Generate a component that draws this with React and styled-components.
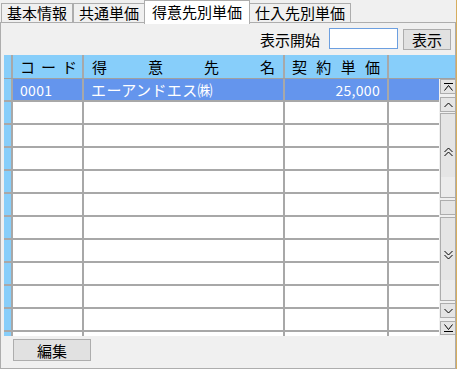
import React from 'react';
import styled, { createGlobalStyle } from 'styled-components';

const GlobalStyle = createGlobalStyle`
  html, body {
    margin: 0;
    padding: 0;
    background: #f0f0f0;
  }
  body {
    font-family: "Noto Sans CJK JP", "DejaVu Sans", sans-serif;
    font-size: 15px;
    color: #000000;
  }
  * {
    box-sizing: border-box;
  }
`;

const Window = styled.div`
  width: 457px;
  height: 369px;
  display: flex;
  flex-direction: column;
  border-right: 1px solid #d6ad5e;
  background: #f0f0f0;
  overflow: hidden;
`;

const TabBar = styled.div`
  display: flex;
  align-items: flex-end;
  height: 23px;
  padding-left: 1px;
  position: relative;
  z-index: 1;
`;

const Tab = styled.div`
  display: flex;
  align-items: center;
  height: ${(p) => (p.$active ? '24px' : '20px')};
  margin: ${(p) => (p.$active ? '0 -1px -1px' : '0')};
  padding: ${(p) => (p.$active ? '0 7px 2px' : '0 5px 1px')};
  border: 1px solid #adadad;
  border-bottom: ${(p) => (p.$active ? 'none' : '1px solid #adadad')};
  background: ${(p) => (p.$active ? '#ffffff' : '#f0f0f0')};
  line-height: 1;
  white-space: nowrap;
  z-index: ${(p) => (p.$active ? 2 : 1)};
`;

const Panel = styled.div`
  flex: 1;
  display: flex;
  flex-direction: column;
  border: 1px solid #adadad;
  margin-top: -1px;
  min-height: 0;
`;

const Toolbar = styled.div`
  height: 32px;
  display: flex;
  align-items: center;
  justify-content: flex-end;
  padding-right: 4px;
`;

const FieldLabel = styled.span`
  margin-right: 9px;
  line-height: 1;
`;

const TextInput = styled.input`
  width: 69px;
  height: 21px;
  margin: -1px 5px 0 0;
  border: 1px solid #6c9fe0;
  background: #ffffff;
  outline: none;
  font: inherit;
`;

const Button = styled.button`
  width: ${(p) => p.$w}px;
  height: ${(p) => p.$h}px;
  padding: 0;
  border: 1px solid #adadad;
  background: #e1e1e1;
  font-family: inherit;
  font-size: 15px;
  line-height: 1;
  color: #000000;
`;

const Grid = styled.div`
  flex: 1;
  display: flex;
  flex-direction: column;
  margin-left: 3px;
  min-height: 0;
`;

const HeaderRow = styled.div`
  display: grid;
  grid-template-columns: 9px 71px 201px 104px 1fr;
  height: 24px;
  background: #87cefa;
  border-bottom: 1px solid #a0a0a0;
`;

const HeaderCell = styled.div`
  display: flex;
  align-items: center;
  justify-content: space-between;
  padding: ${(p) => p.$pad};
  border-right: ${(p) => (p.$last ? 'none' : '2px solid #a8a8a8')};
  line-height: 1;
`;

const Body = styled.div`
  flex: 1;
  display: flex;
  min-height: 0;
  overflow: hidden;
`;

const Rows = styled.div`
  width: 435px;
  display: flex;
  flex-direction: column;
  background: #ffffff;
`;

const Row = styled.div`
  display: grid;
  grid-template-columns: 9px 71px 201px 104px 50px;
  flex: 0 0 23px;
  border-bottom: 2px solid #a8a8a8;
  background: ${(p) => (p.$selected ? '#6495ed' : '#ffffff')};
  color: ${(p) => (p.$selected ? '#ffffff' : '#000000')};
`;

const Gutter = styled.div`
  background: #87cefa;
  border-right: 2px solid #a8a8a8;
`;

const Cell = styled.div`
  display: flex;
  align-items: center;
  justify-content: ${(p) => (p.$right ? 'flex-end' : 'flex-start')};
  padding: 0 7px;
  border-right: ${(p) => (p.$last ? 'none' : '2px solid #a8a8a8')};
  font-size: ${(p) => (p.$num ? '14px' : '15px')};
  letter-spacing: ${(p) => (p.$num ? '0.3px' : '0.4px')};
  white-space: nowrap;
  line-height: 1;
`;

const ScrollBar = styled.div`
  flex: 0 0 17px;
  display: flex;
  flex-direction: column;
  padding-left: 1px;
  background: #f0f0f0;
`;

const ScrollButton = styled.div`
  flex: 0 0 ${(p) => p.$h}px;
  margin-top: ${(p) => p.$gap}px;
  display: flex;
  align-items: center;
  justify-content: center;
  border: 1px solid #adadad;
  background: ${(p) =>
    p.$page ? 'linear-gradient(#e5e5e5 0%, #e5e5e5 76%, #ececec 76%, #ececec 100%)' : '#e5e5e5'};
  padding-bottom: ${(p) => (p.$page ? '8px' : '0')};
`;

const Footer = styled.div`
  height: 32px;
  padding: 3px 0 0 12px;
  background: #f0f0f0;
`;

const icons = {
  top: 'M1 1.5H10M1.5 8.5L5.5 3.5L9.5 8.5',
  up: 'M1.5 7L5.5 3L9.5 7',
  dblUp: 'M1.5 5L5.5 1L9.5 5M1.5 9L5.5 5L9.5 9',
  dblDown: 'M1.5 1L5.5 5L9.5 1M1.5 5L5.5 9L9.5 5',
  down: 'M1.5 3L5.5 7L9.5 3',
  bottom: 'M1.5 1.5L5.5 6.5L9.5 1.5M1 8.5H10',
};

const Arrow = ({ kind }) => (
  <svg width="11" height="10" viewBox="0 0 11 10">
    <path d={icons[kind]} fill="none" stroke="#000" strokeWidth="1" />
  </svg>
);

const Spread = ({ text }) => text.split('').map((c, i) => <span key={i}>{c}</span>);

const rows = [
  { code: '0001', name: 'エーアンドエス㈱', price: '25,000' },
  ...Array.from({ length: 11 }, () => ({ code: '', name: '', price: '' })),
];

export default function App() {
  return (
    <>
      <GlobalStyle />
      <Window>
        <TabBar>
          <Tab>基本情報</Tab>
          <Tab>共通単価</Tab>
          <Tab $active>得意先別単価</Tab>
          <Tab>仕入先別単価</Tab>
        </TabBar>
        <Panel>
          <Toolbar>
            <FieldLabel>表示開始</FieldLabel>
            <TextInput />
            <Button $w={48} $h={21}>表示</Button>
          </Toolbar>
          <Grid>
            <HeaderRow>
              <HeaderCell $pad="0" />
              <HeaderCell $pad="0 5px 0 7px"><Spread text="コード" /></HeaderCell>
              <HeaderCell $pad="0 8px"><Spread text="得意先名" /></HeaderCell>
              <HeaderCell $pad="0 7px"><Spread text="契約単価" /></HeaderCell>
              <HeaderCell $last />
            </HeaderRow>
            <Body>
              <Rows>
                {rows.map((r, i) => (
                  <Row key={i} $selected={i === 0}>
                    <Gutter />
                    <Cell $num>{r.code}</Cell>
                    <Cell>{r.name}</Cell>
                    <Cell $num $right>{r.price}</Cell>
                    <Cell $last />
                  </Row>
                ))}
              </Rows>
              <ScrollBar>
                <ScrollButton $h={15} $gap={0}><Arrow kind="top" /></ScrollButton>
                <ScrollButton $h={15} $gap={3}><Arrow kind="up" /></ScrollButton>
                <ScrollButton $h={85} $gap={1} $page><Arrow kind="dblUp" /></ScrollButton>
                <ScrollButton $h={15} $gap={2} />
                <ScrollButton $h={84} $gap={2} $page><Arrow kind="dblDown" /></ScrollButton>
                <ScrollButton $h={15} $gap={2}><Arrow kind="down" /></ScrollButton>
                <ScrollButton $h={14} $gap={3}><Arrow kind="bottom" /></ScrollButton>
              </ScrollBar>
            </Body>
          </Grid>
          <Footer>
            <Button $w={78} $h={22}>編集</Button>
          </Footer>
        </Panel>
      </Window>
    </>
  );
}
